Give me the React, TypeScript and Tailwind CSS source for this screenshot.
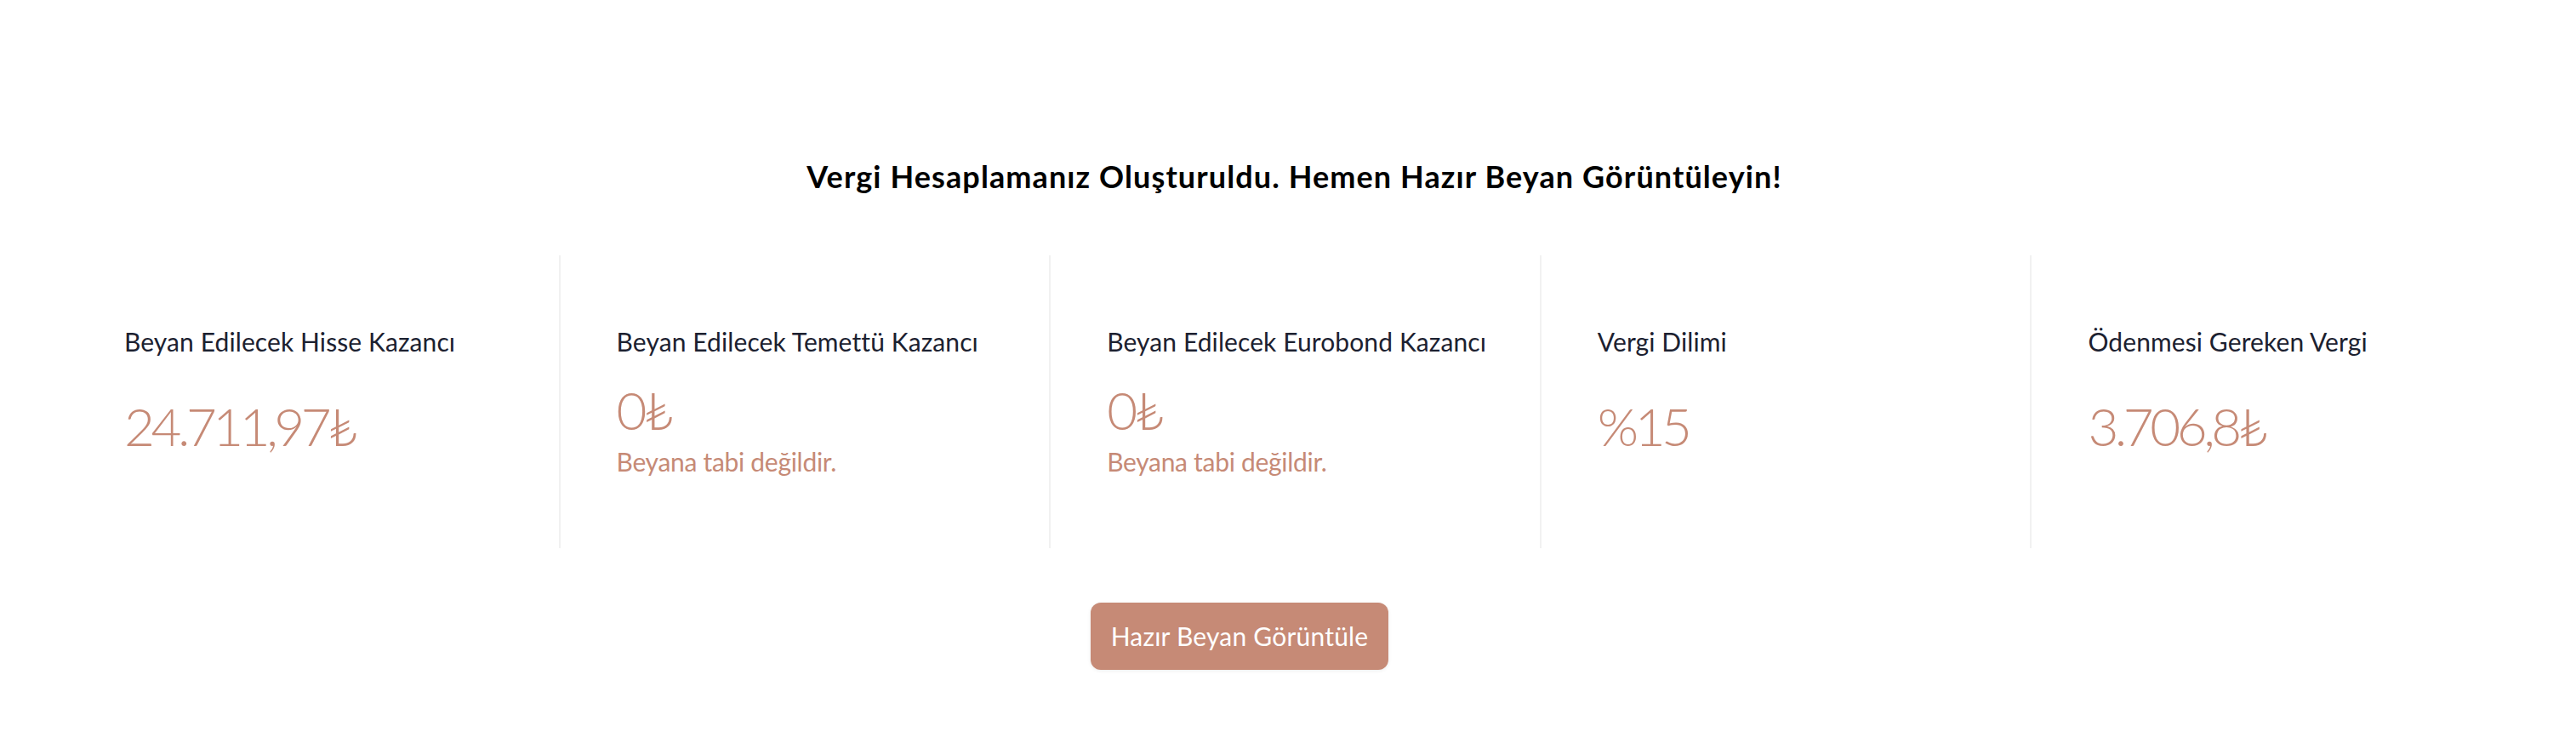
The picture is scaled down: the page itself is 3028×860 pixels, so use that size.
import React from "react";

type Item = { label: string; value: string; note?: string };

const items: Item[] = [
  { label: "Beyan Edilecek Hisse Kazancı", value: "24.711,97₺" },
  { label: "Beyan Edilecek Temettü Kazancı", value: "0₺", note: "Beyana tabi değildir." },
  { label: "Beyan Edilecek Eurobond Kazancı", value: "0₺", note: "Beyana tabi değildir." },
  { label: "Vergi Dilimi", value: "%15" },
  { label: "Ödenmesi Gereken Vergi", value: "3.706,8₺" },
];

export default function App() {
  return (
    <div
      className="w-[3028px] h-[860px] bg-white overflow-hidden"
      style={{ fontFamily: "Lato, 'Noto Sans', sans-serif" }}
    >
      <div className="ml-[80px] w-[2883px] pt-[185px]">
        <h1 className="text-center text-[36px] leading-[44px] font-bold text-black tracking-[1.1px]">
          Vergi Hesaplamanız Oluşturuldu. Hemen Hazır Beyan Görüntüleyin!
        </h1>
        <div className="mt-[71px] grid grid-cols-5 h-[344px]">
          {items.map((it, i) => (
            <div
              key={i}
              className={
                "pl-[66px] pt-[81px] " + (i > 0 ? "border-l-2 border-[#f1f1f1]" : "")
              }
            >
              <div className="text-[30px] leading-[40px] font-normal text-[#1c2130] tracking-[0.1px]">
                {it.label}
              </div>
              {it.note ? (
                <div className="mt-[29px]">
                  <div className="text-[62px] leading-[62px] font-light text-[#c68a76] tracking-[-4px]">
                    {it.value}
                  </div>
                  <div className="mt-[12px] text-[30px] leading-[36px] font-normal text-[#c68a76] tracking-[-0.3px]">
                    {it.note}
                  </div>
                </div>
              ) : (
                <div className="mt-[48px] text-[62px] leading-[62px] font-light text-[#c68a76] tracking-[-4.5px]">
                  {it.value}
                </div>
              )}
            </div>
          ))}
        </div>
      </div>
      <div className="mt-[64px] ml-[1282px] w-[350px] h-[79px] rounded-[12px] bg-[#c68a76] shadow-[0_1px_4px_rgba(0,0,0,0.08)] flex items-center justify-center text-white text-[30px] tracking-[0.2px]">
        Hazır Beyan Görüntüle
      </div>
    </div>
  );
}
